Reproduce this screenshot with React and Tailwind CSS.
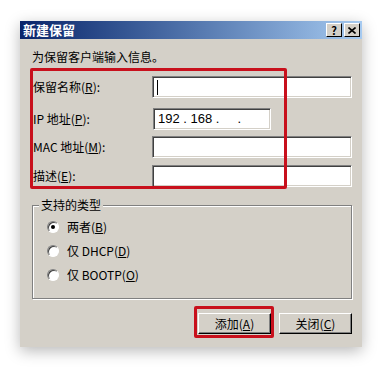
import React from 'react'

const font = { fontFamily: '"Noto Sans CJK SC", "Liberation Sans", sans-serif' }

const Field = ({ w = 'w-[200px]', children }) => (
  <div className={`${w} h-[22px] bg-white border-t border-l border-[#808080] border-b border-r border-b-white border-r-white shadow-[inset_1px_1px_0_#404040,inset_-1px_-1px_0_#d4d0c8] flex items-center px-[4px] text-[13px] text-black`}>
    {children}
  </div>
)

const Radio = ({ checked, children }) => (
  <div className="flex items-center h-[16px]">
    <div className="w-[12px] h-[12px] rounded-full bg-white border border-t-[#808080] border-l-[#808080] border-b-white border-r-white shadow-[inset_1px_1px_0_#404040] flex items-center justify-center">
      {checked && <div className="w-[4px] h-[4px] rounded-full bg-black" />}
    </div>
    <span className="ml-[8px] text-[12px] leading-[16px] text-black">{children}</span>
  </div>
)

const Btn = ({ children }) => (
  <div className="w-[73px] h-[21px] bg-[#d4d0c8] border border-t-white border-l-white border-b-black border-r-black shadow-[inset_-1px_-1px_0_#808080] flex items-center justify-center text-[12px] text-black">
    {children}
  </div>
)

export default function App() {
  return (
    <div className="w-[382px] h-[367px] bg-white pt-[21px] pl-[20px]" style={font}>
      <div className="relative w-[342px] h-[326px] bg-[#d4d0c8] shadow-[0_4px_14px_rgba(0,0,0,0.28)]">
        {/* title bar */}
        <div className="h-[18px] flex items-center justify-between pl-[3px] pr-[2px] bg-gradient-to-r from-[#0a246a] to-[#a6caf0]">
          <span className="text-white font-bold text-[13px] leading-[16px]">新建保留</span>
          <div className="flex gap-[2px]">
            <div className="w-[16px] h-[14px] bg-[#d4d0c8] border border-t-white border-l-white border-b-black border-r-black flex items-center justify-center text-[11px] font-bold leading-none text-black">?</div>
            <div className="w-[16px] h-[14px] bg-[#d4d0c8] border border-t-white border-l-white border-b-black border-r-black flex items-center justify-center">
              <svg width="8" height="7" viewBox="0 0 8 7"><path d="M0.5 0.5 L7.5 6.5 M7.5 0.5 L0.5 6.5" stroke="#000" strokeWidth="1.6" /></svg>
            </div>
          </div>
        </div>

        {/* body */}
        <div className="pl-[12px] pr-[10px] pt-[10px]">
          <div className="text-[12px] leading-[16px] text-black">为保留客户端输入信息。</div>

          <div className="mt-[11px] flex flex-col">
            <div className="flex items-center justify-between">
              <span className="pl-[1px] text-[12px] text-black">保留名称(<u>R</u>):</span>
              <Field><span className="w-px h-[15px] bg-black" /></Field>
            </div>
            <div className="flex items-center mt-[10px]">
              <span className="pl-[1px] w-[121px] text-[12px] text-black">IP 地址(<u>P</u>):</span>
              <Field w="w-[118px]">
                <span className="whitespace-pre" style={{ fontFamily: '"Liberation Sans", sans-serif' }}>{'192 . 168 .     .'}</span>
              </Field>
            </div>
            <div className="flex items-center justify-between mt-[6px]">
              <span className="pl-[1px] text-[12px] text-black">MAC 地址(<u>M</u>):</span>
              <Field />
            </div>
            <div className="flex items-center justify-between mt-[7px]">
              <span className="pl-[1px] text-[12px] text-black">描述(<u>E</u>):</span>
              <Field />
            </div>
          </div>

          {/* group box */}
          <div className="relative mt-[18px] h-[94px] border border-[#808080] shadow-[1px_1px_0_#fff,inset_1px_1px_0_#fff] pl-[14px] pt-[13px] flex flex-col gap-[8px]">
            <span className="absolute -top-[9px] left-[6px] px-[2px] bg-[#d4d0c8] text-[12px] leading-[16px] text-black">支持的类型</span>
            <Radio checked>两者(<u>B</u>)</Radio>
            <Radio>仅 DHCP(<u>D</u>)</Radio>
            <Radio>仅 BOOTP(<u>O</u>)</Radio>
          </div>

          <div className="mt-[14px] flex justify-end gap-[8px]">
            <Btn>添加(<u>A</u>)</Btn>
            <Btn>关闭(<u>C</u>)</Btn>
          </div>
        </div>

        {/* red annotation boxes */}
        <div className="absolute left-[10px] top-[47px] w-[257px] h-[121px] border-[3px] border-[#c8101c] rounded-[2px]" />
        <div className="absolute left-[174px] top-[285px] w-[80px] h-[32px] border-[3px] border-[#c8101c] rounded-[2px]" />
      </div>
    </div>
  )
}
